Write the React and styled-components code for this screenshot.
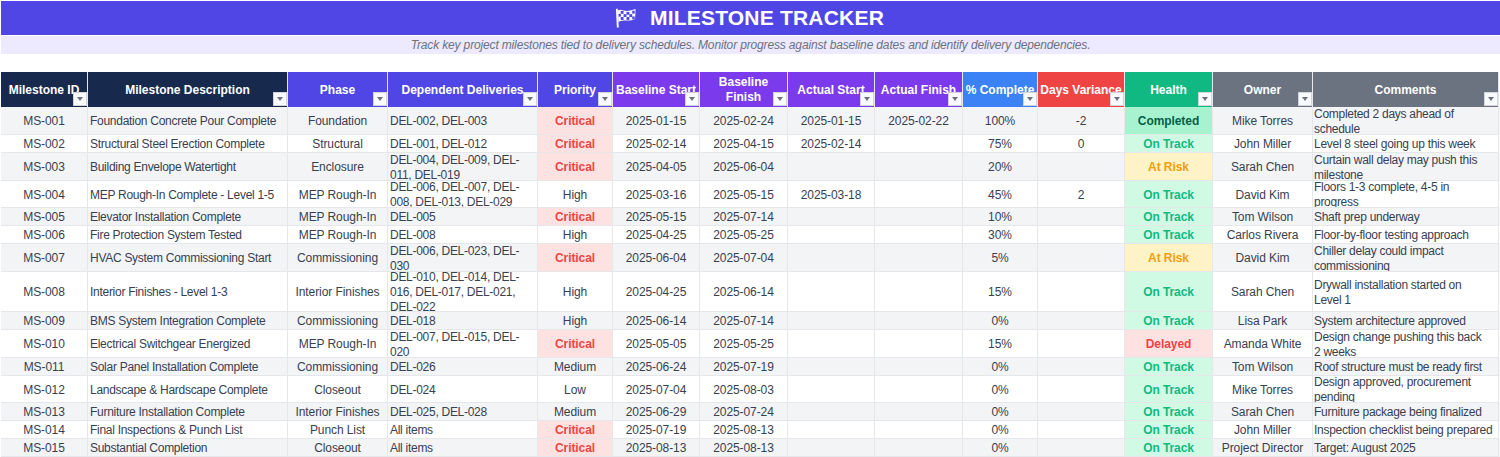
import React from "react";
import styled, { createGlobalStyle } from "styled-components";

const Global = createGlobalStyle`
  html, body { margin: 0; padding: 0; background: #fff; height: 457px; overflow: hidden; }
  body { font-family: "Liberation Sans", Arial, sans-serif; }
`;
const Page = styled.div`
  width: 1500px; height: 457px; overflow: hidden; padding: 1px 0 0 1px; box-sizing: border-box;
`;
const TitleBar = styled.header`
  height: 34px; background: #4f46e5; color: #fff; display: flex; align-items: center; justify-content: center; gap: 13px;
  padding-right: 3px; box-sizing: border-box;
  font-size: 21px; font-weight: 700; letter-spacing: 0.2px;
`;
const Subtitle = styled.div`
  margin-top: 1px; height: 18px; background: #ede9fe; color: #6b7280; font-size: 12px; font-style: italic; letter-spacing: -0.15px;
  display: flex; align-items: center; justify-content: center;
`;
const Table = styled.div`margin-top: 18px;`;
const cols = "87px 200px 100px 150px 75px 87px 88px 87px 88px 75px 87px 88px 100px 186px";
const HeadRow = styled.div`
  display: grid; grid-template-columns: ${cols}; height: 35px;
`;
const HeadCell = styled.div`
  position: relative; background: ${p => p.$bg}; color: #fff; font-size: 12px; font-weight: 700; line-height: 15px;
  display: flex; align-items: center; justify-content: center; text-align: center;
  border-right: 1px solid #e5e7eb; box-sizing: border-box; padding: 1px 1px 0; overflow: hidden;
`;
const HeadLabel = styled.span`white-space: ${p => p.$wrap ? "normal" : "nowrap"};`;
const FilterBtn = styled.span`
  position: absolute; right: 0; bottom: 1px; width: 14px; height: 14px; background: #f9fafb; border: 1px solid #d1d5db; box-sizing: border-box;
  display: flex; align-items: center; justify-content: center;
  &::after { content: ""; width: 0; height: 0; border-left: 3px solid transparent; border-right: 3px solid transparent; border-top: 4px solid #6b7280; }
`;
const Row = styled.div`
  display: grid; grid-template-columns: ${cols}; height: ${p => p.$h}px; background: ${p => p.$alt ? "#f3f4f6" : "#fff"};
`;
const Cell = styled.div`
  display: flex; align-items: center; justify-content: ${p => p.$left ? "flex-start" : "center"};
  text-align: ${p => p.$left ? "left" : "center"}; padding: 2px 2px 0 ${p => p.$inset ?? 2}px; box-sizing: border-box; overflow: hidden;
  white-space: pre-line;
  font-size: 12px; line-height: 15px; color: #374151; letter-spacing: ${p => p.$left ? "-0.28px" : "-0.08px"};
  border-right: 1px solid #e5e7eb; border-bottom: 1px solid #e5e7eb;
`;
const Badge = styled(Cell)`
  background: ${p => p.$bg}; color: ${p => p.$fg}; font-weight: 700;
`;
const tones = {
  Critical: ["#fee2e2", "#ef4444"],
  Completed: ["#a7f3d0", "#065f46"],
  "On Track": ["#d1fae5", "#10b981"],
  "At Risk": ["#fef3c7", "#f59e0b"],
  Delayed: ["#fee2e2", "#ef4444"],
};
const heads = [
  ["Milestone ID", "#172a4d"], ["Milestone Description", "#172a4d"], ["Phase", "#4f46e5"], ["Dependent Deliveries", "#4f46e5"], ["Priority", "#4f46e5"],
  ["Baseline Start", "#7c3aed"], ["Baseline Finish", "#7c3aed", true], ["Actual Start", "#7c3aed"], ["Actual Finish", "#7c3aed"],
  ["% Complete", "#3b82f6"], ["Days Variance", "#ef4444"], ["Health", "#10b981"], ["Owner", "#6b7280"], ["Comments", "#6b7280"],
];
const rows = [
  [28,"MS-001","Foundation Concrete Pour Complete","Foundation","DEL-002, DEL-003","Critical","2025-01-15","2025-02-24","2025-01-15","2025-02-22","100%","-2","Completed","Mike Torres","Completed 2 days ahead of schedule"],
  [18,"MS-002","Structural Steel Erection Complete","Structural","DEL-001, DEL-012","Critical","2025-02-14","2025-04-15","2025-02-14","","75%","0","On Track","John Miller","Level 8 steel going up this week"],
  [28,"MS-003","Building Envelope Watertight","Enclosure","DEL-004, DEL-009, DEL-011, DEL-019","Critical","2025-04-05","2025-06-04","","","20%","","At Risk","Sarah Chen","Curtain wall delay may push this milestone"],
  [27,"MS-004","MEP Rough-In Complete - Level 1-5","MEP Rough-In","DEL-006, DEL-007, DEL-008, DEL-013, DEL-029","High","2025-03-16","2025-05-15","2025-03-18","","45%","2","On Track","David Kim","Floors 1-3 complete, 4-5 in progress"],
  [18,"MS-005","Elevator Installation Complete","MEP Rough-In","DEL-005","Critical","2025-05-15","2025-07-14","","","10%","","On Track","Tom Wilson","Shaft prep underway"],
  [18,"MS-006","Fire Protection System Tested","MEP Rough-In","DEL-008","High","2025-04-25","2025-05-25","","","30%","","On Track","Carlos Rivera","Floor-by-floor testing approach"],
  [28,"MS-007","HVAC System Commissioning Start","Commissioning","DEL-006, DEL-023, DEL-030","Critical","2025-06-04","2025-07-04","","","5%","","At Risk","David Kim","Chiller delay could impact commissioning"],
  [40,"MS-008","Interior Finishes - Level 1-3","Interior Finishes","DEL-010, DEL-014, DEL-016, DEL-017, DEL-021, DEL-022","High","2025-04-25","2025-06-14","","","15%","","On Track","Sarah Chen","Drywall installation started on\nLevel 1"],
  [18,"MS-009","BMS System Integration Complete","Commissioning","DEL-018","High","2025-06-14","2025-07-14","","","0%","","On Track","Lisa Park","System architecture approved"],
  [28,"MS-010","Electrical Switchgear Energized","MEP Rough-In","DEL-007, DEL-015, DEL-020","Critical","2025-05-05","2025-05-25","","","15%","","Delayed","Amanda White","Design change pushing this back\n2 weeks"],
  [18,"MS-011","Solar Panel Installation Complete","Commissioning","DEL-026","Medium","2025-06-24","2025-07-19","","","0%","","On Track","Tom Wilson","Roof structure must be ready first"],
  [27,"MS-012","Landscape & Hardscape Complete","Closeout","DEL-024","Low","2025-07-04","2025-08-03","","","0%","","On Track","Mike Torres","Design approved, procurement pending"],
  [18,"MS-013","Furniture Installation Complete","Interior Finishes","DEL-025, DEL-028","Medium","2025-06-29","2025-07-24","","","0%","","On Track","Sarah Chen","Furniture package being finalized"],
  [18,"MS-014","Final Inspections & Punch List","Punch List","All items","Critical","2025-07-19","2025-08-13","","","0%","","On Track","John Miller","Inspection checklist being prepared"],
  [18,"MS-015","Substantial Completion","Closeout","All items","Critical","2025-08-13","2025-08-13","","","0%","","On Track","Project Director","Target: August 2025"],
];
const leftCols = new Set([1, 3, 13]);
const FlagIcon = () => (
  <svg width="23" height="22" viewBox="0 0 24 22" aria-hidden="true">
    <path d="M2 1.5 L3.8 1 L5 21 L3 21 Z" fill="#fff" />
    <path d="M4 3 C8 1 11 4.5 15 3.5 C18 3 20 2 22.5 1.5 L22 12 C18 14 15 13.5 12 13.5 C9 13.5 7 14 4.6 15 Z" fill="#fff" />
    <g fill="#4f46e5">
      <rect x="7" y="3.6" width="3" height="3" /><rect x="13" y="4.6" width="3" height="3" /><rect x="19" y="3.4" width="2.6" height="3" />
      <rect x="4.8" y="6.6" width="2.4" height="3" /><rect x="10" y="7" width="3" height="3" /><rect x="16" y="7" width="3" height="3" />
      <rect x="7" y="10" width="3" height="3" /><rect x="13" y="10" width="3" height="3" /><rect x="19" y="9.4" width="2.6" height="3" />
    </g>
  </svg>
);
export default function App() {
  return (
    <Page>
      <Global />
      <TitleBar><FlagIcon /><span>MILESTONE TRACKER</span></TitleBar>
      <Subtitle>Track key project milestones tied to delivery schedules. Monitor progress against baseline dates and identify delivery dependencies.</Subtitle>
      <Table>
        <HeadRow>
          {heads.map(([label, bg, wrap]) => (
            <HeadCell key={label} $bg={bg}><HeadLabel $wrap={wrap}>{label}</HeadLabel><FilterBtn /></HeadCell>
          ))}
        </HeadRow>
        {rows.map(([h, ...cells], i) => (
          <Row key={cells[0]} $h={h} $alt={i % 2 === 0}>
            {cells.map((c, j) => tones[c]
              ? <Badge key={j} $bg={tones[c][0]} $fg={tones[c][1]}>{c}</Badge>
              : <Cell key={j} $left={leftCols.has(j)} $inset={j === 13 ? 1 : 2}>{c}</Cell>)}
          </Row>
        ))}
      </Table>
    </Page>
  );
}
